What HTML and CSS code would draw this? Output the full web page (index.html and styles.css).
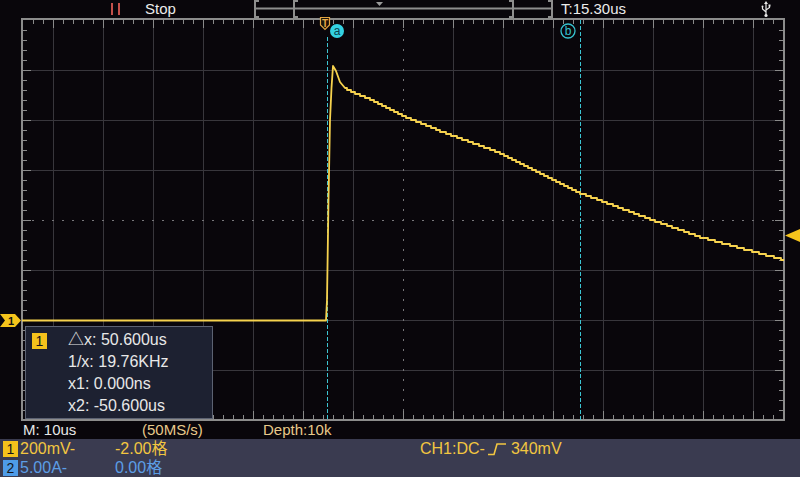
FILE: index.html
```html
<!DOCTYPE html>
<html lang="en">
<head>
    <meta charset="UTF-8">
    <meta name="viewport" content="width=device-width, initial-scale=1.0">
    <link rel="stylesheet" href="styles.css">
    <title>Scope - CH1 capture</title>
</head>
<body>
    <div class="scope">
        <div class="topbar">
            <svg class="pause" width="12" height="19" viewBox="0 0 12 19">
                <rect x="1" y="3" width="2" height="12"/>
                <rect x="8" y="3" width="2" height="12"/>
            </svg>
            <span class="run-state">Stop</span>
            <svg class="timeline" width="300" height="19" viewBox="0 0 300 19">
                <path d="M5 1H1V17H5 M44 1H40V17H44 M255 1H259V17H255 M294 1H298V17H294 M2 8.5H297"/>
                <polygon class="pos" points="122,2 129,2 125.5,6"/>
            </svg>
            <span class="trig-time">T:15.30us</span>
            <svg class="usb" width="10" height="19" viewBox="0 0 10 19">
                <path d="M5 3V15 M5 12L1.5 9V7 M5 10L8.5 7.5V6"/>
                <polygon points="5,1 3,4 7,4"/>
                <circle cx="5" cy="15.5" r="1.6"/>
                <circle cx="1.5" cy="6.5" r="1"/>
                <rect x="7.5" y="4.5" width="2" height="2"/>
            </svg>
        </div>

        <div class="screen">
            <svg class="plot" width="800" height="402" viewBox="0 19 800 402">
                <path class="grid" d="M53.5 20V419 M103.5 20V419 M153.5 20V419 M203.5 20V419 M253.5 20V419 M303.5 20V419 M353.5 20V419 M453.5 20V419 M503.5 20V419 M553.5 20V419 M603.5 20V419 M653.5 20V419 M703.5 20V419 M753.5 20V419 M23 70.5H783 M23 120.5H783 M23 170.5H783 M23 270.5H783 M23 320.5H783 M23 370.5H783"/>
                <line class="center" x1="32" y1="220.5" x2="783" y2="220.5"/>
                <line class="center" x1="403.5" y1="29" x2="403.5" y2="419"/>

                <!-- border ticks -->
                <line class="tick" x1="33" y1="22" x2="784" y2="22"/>
                <line class="tick major" x1="53" y1="24" x2="784" y2="24"/>
                <line class="tick" x1="33" y1="417" x2="784" y2="417"/>
                <line class="tick major" x1="53" y1="415" x2="784" y2="415"/>
                <line class="tick" x1="25" y1="30" x2="25" y2="420"/>
                <line class="tick major" x1="27" y1="70" x2="27" y2="420"/>
                <line class="tick" x1="781" y1="30" x2="781" y2="420"/>
                <line class="tick major" x1="779" y1="70" x2="779" y2="420"/>

                <rect class="frame" x="22" y="19" width="762" height="401"/>

                <line class="cursor" x1="327.5" y1="37" x2="327.5" y2="420"/>
                <line class="cursor" x1="580.5" y1="20" x2="580.5" y2="420"/>

                <path class="trace" id="trace" d=""/>

                <polygon class="marker" points="0,314 15,314 21,320.5 15,327 0,327 5,320.5"/>
                <text class="marker-num" x="11" y="325">1</text>
                <polygon class="marker" points="785,235.5 800,229 800,242"/>

                <path class="trig-flag" d="M320.5 17.5H329.5V25L325 29.5L320.5 25Z"/>
                <text class="trig-t" x="325" y="26.5">T</text>
                <circle class="cur-a" cx="337" cy="31" r="7"/>
                <text class="cur-a-label" x="337" y="35">a</text>
                <circle class="cur-b" cx="568" cy="31" r="7"/>
                <text class="cur-b-label" x="568" y="35">b</text>
            </svg>

            <div class="cursor-info">
                <span class="badge ch1">1</span>
                <div class="readings">
                    <div>△x: 50.600us</div>
                    <div>1/x: 19.76KHz</div>
                    <div>x1: 0.000ns</div>
                    <div>x2: -50.600us</div>
                </div>
            </div>
        </div>

        <div class="timebase">
            <span class="tb-main">M: 10us</span>
            <span class="tb-rate">(50MS/s)</span>
            <span class="tb-rate">Depth:10k</span>
        </div>

        <div class="channels">
            <div class="ch-row ch1-row">
                <span class="badge ch1">1</span>
                <span>200mV-</span>
                <span>-2.00格</span>
                <span class="trigger">CH1:DC-<svg class="slope" width="22" height="14" viewBox="0 0 22 14"><path d="M2 12.5H8L11 2H20"/></svg>340mV</span>
            </div>
            <div class="ch-row ch2-row">
                <span class="badge ch2">2</span>
                <span>5.00A-</span>
                <span>0.00格</span>
                <span></span>
            </div>
        </div>
    </div>
    <script src="script.js"></script>
</body>
</html>
```

FILE: styles.css
```css
body {
    margin: 0;
    padding: 0;
    background: #000;
    font-family: "Liberation Sans", Arial, "Noto Sans CJK SC", sans-serif;
}
.scope {
    width: 800px;
    height: 477px;
    background-color: #09060b;
    display: flex;
    flex-direction: column;
    overflow: hidden;
}

/* top status bar */
.topbar {
    height: 19px;
    flex: none;
    display: flex;
    align-items: center;
    padding-left: 110px;
    font-size: 15px;
    color: #ececec;
}
.pause rect {
    fill: #c4504a;
}
.run-state {
    margin-left: 23px;
    width: 109px;
    margin-top: -2px;
}
.timeline {
    align-self: flex-start;
}
.timeline path {
    fill: none;
    stroke: #8e8e8e;
    stroke-width: 2;
}
.timeline .pos {
    fill: #9a9a9a;
}
.trig-time {
    margin-left: 7px;
    margin-top: -2px;
}
.usb {
    margin-left: auto;
    margin-right: 29px;
}
.usb path {
    fill: none;
    stroke: #e8e8e8;
    stroke-width: 1.2;
}
.usb polygon,
.usb circle,
.usb rect {
    fill: #e8e8e8;
}

/* waveform screen */
.screen {
    position: relative;
    height: 402px;
    flex: none;
}
.plot {
    display: block;
    overflow: visible;
}
.grid {
    fill: none;
    stroke: #38363c;
    stroke-width: 1;
}
.center {
    stroke: #77767a;
    stroke-width: 1;
    stroke-dasharray: 2 8;
}
.tick {
    stroke: #8a8a8a;
    stroke-width: 4;
    stroke-dasharray: 1 9;
}
.tick.major {
    stroke-width: 8;
    stroke-dasharray: 1 49;
}
.frame {
    fill: none;
    stroke: #8c8c8c;
    stroke-width: 2;
}
.cursor {
    stroke: #3cc4d2;
    stroke-width: 1;
    stroke-dasharray: 4 2;
}
.trace {
    fill: none;
    stroke: #f6d24e;
    stroke-width: 1.8;
    stroke-linejoin: round;
}
.marker {
    fill: #f5c41c;
}
.marker-num {
    font-size: 11px;
    font-weight: bold;
    fill: #111;
    text-anchor: middle;
}
.trig-flag {
    fill: #1a1208;
    stroke: #e2a442;
    stroke-width: 1.2;
}
.trig-t {
    font-size: 10px;
    font-weight: bold;
    fill: #e8aa48;
    text-anchor: middle;
}
.cur-a {
    fill: #34d2e2;
}
.cur-a-label {
    font-size: 12px;
    fill: #0b4350;
    text-anchor: middle;
}
.cur-b {
    fill: none;
    stroke: #36c2cf;
    stroke-width: 1.3;
}
.cur-b-label {
    font-size: 12px;
    fill: #36c2cf;
    text-anchor: middle;
}

/* cursor readout box */
.cursor-info {
    position: absolute;
    left: 25px;
    top: 307px;
    width: 188px;
    height: 93px;
    box-sizing: border-box;
    border: 1px solid #5c6272;
    background-color: #1d2131;
    display: grid;
    grid-template-columns: 36px auto;
    align-items: start;
    padding: 2px 0 0 6px;
    color: #e8e8e8;
    font-size: 16px;
}
.cursor-info .badge {
    margin-top: 4px;
}
.readings div {
    line-height: 22px;
    white-space: nowrap;
}

/* timebase line */
.timebase {
    height: 18px;
    flex: none;
    display: grid;
    grid-template-columns: 119px 121px auto;
    padding-left: 23px;
    font-size: 15px;
    line-height: 18px;
}
.tb-main {
    color: #e6e6e6;
}
.tb-rate {
    color: #e8c98a;
}

/* channel settings */
.channels {
    flex: 1;
    background-color: #3a3b50;
    font-size: 16px;
    line-height: 19px;
}
.ch-row {
    height: 19px;
    display: grid;
    grid-template-columns: 17px 95px 305px auto;
    align-items: center;
    padding-left: 3px;
    white-space: nowrap;
}
.ch-row span {
    line-height: 18px;
}
.ch1-row {
    color: #f2c640;
}
.ch2-row {
    color: #5c9ee6;
}
.badge {
    width: 15px;
    height: 16px;
    line-height: 16px;
    text-align: center;
    font-size: 14px;
    color: #14141c;
}
.ch-row .badge {
    line-height: 16px;
}
.badge.ch1 {
    background-color: #f5c21c;
}
.badge.ch2 {
    background-color: #4e9ce8;
}
.trigger {
    display: flex;
    align-items: center;
}
.slope {
    margin: 0 3px 0 1px;
}
.slope path {
    fill: none;
    stroke: #f2c640;
    stroke-width: 1.6;
}
```

FILE: script.js
```js
// key points of the captured pulse, read off the screen
const pulse = [
    [333, 66], [336, 71], [340, 82], [345, 88], [352, 92], [370, 99],
    [403, 116], [440, 131], [500, 153], [580, 193], [655, 221],
    [700, 237], [784, 260]
];

function level(x) {
    for (let i = 1; i < pulse.length; i++) {
        const [x0, y0] = pulse[i - 1];
        const [x1, y1] = pulse[i];
        if (x <= x1) {
            return y0 + (y1 - y0) * (x - x0) / (x1 - x0);
        }
    }
    return pulse[pulse.length - 1][1];
}

function drawTrace() {
    let d = 'M22 320.5 H326 L327 300 L328.5 200 L330 120 L331.5 88 L333 66 L336 71 L340 82 L345 88';
    let y = 88;
    for (let x = 346; x <= 784; x++) {
        const step = Math.round(level(x) / 2) * 2;
        if (step !== y) {
            d += ` H${x} V${step}`;
            y = step;
        }
    }
    d += ' H784';
    document.getElementById('trace').setAttribute('d', d);
}

document.addEventListener('DOMContentLoaded', drawTrace);
```
